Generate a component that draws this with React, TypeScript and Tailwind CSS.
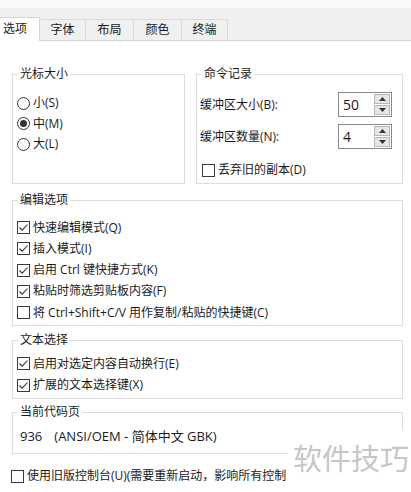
import React from 'react'

const tabs = [
  { label: '字体', w: 'w-[46px]' },
  { label: '布局', w: 'w-[48px]' },
  { label: '颜色', w: 'w-[48px]' },
  { label: '终端', w: 'w-[46px]' },
]

const Radio = ({ checked }: { checked?: boolean }) => (
  <span className="w-[13px] h-[13px] rounded-full border border-[#333] flex items-center justify-center shrink-0">
    {checked && <span className="w-[7px] h-[7px] rounded-full bg-[#333]" />}
  </span>
)

const Check = ({ checked }: { checked?: boolean }) => (
  <span className="w-[13px] h-[13px] border border-[#3a3a3a] bg-white shrink-0 flex items-center justify-center">
    {checked && (
      <svg width="11" height="11" viewBox="0 0 11 11">
        <polyline points="1.5,5.5 4.2,8.2 9.5,2.5" fill="none" stroke="#333" strokeWidth="1.1" />
      </svg>
    )}
  </span>
)

const Group = ({ title, className, children }: { title: string; className?: string; children: React.ReactNode }) => (
  <fieldset className={`border border-[#dcdcdc] ${className ?? ''}`}>
    <legend className="ml-[5px] px-[2px] leading-4">{title}</legend>
    {children}
  </fieldset>
)

const Spin = ({ value }: { value: string }) => (
  <div className="w-[54px] h-[25px] border border-[#8a8a8a] bg-white flex items-center">
    <span className="flex-1 pl-[4px] text-[14px] leading-none">{value}</span>
    <div className="w-[17px] h-full flex flex-col py-[1px] pr-[1px] gap-[1px]">
      <div className="flex-1 bg-[#e6e6e6] border border-[#b8b8b8] flex items-center justify-center">
        <svg width="7" height="4" viewBox="0 0 7 4"><polygon points="3.5,0 7,4 0,4" fill="#333" /></svg>
      </div>
      <div className="flex-1 bg-[#e6e6e6] border border-[#b8b8b8] flex items-center justify-center">
        <svg width="7" height="4" viewBox="0 0 7 4"><polygon points="0,0 7,0 3.5,4" fill="#333" /></svg>
      </div>
    </div>
  </div>
)

const CheckRow = ({ checked, label, h }: { checked?: boolean; label: string; h: string }) => (
  <div className={`flex items-center gap-[3px] whitespace-nowrap ${h}`}>
    <Check checked={checked} />
    <span>{label}</span>
  </div>
)

export default function App() {
  return (
    <div className="relative w-[411px] h-[492px] overflow-hidden bg-white text-[12px] text-[#1a1a1a] font-['Open_Sans','Noto_Sans_CJK_SC',sans-serif]">
      <div className="h-[8px] bg-[#fafafa]" />
      <div className="h-[33px] bg-[#f0f0f0] border-b border-[#d4d4d4] flex items-end">
        <div className="w-[40px] h-[24px] -mb-px bg-white border-r border-t border-[#d4d4d4] pl-[3px] pt-[3px] leading-4">
          选项
        </div>
        {tabs.map((t) => (
          <div
            key={t.label}
            className={`${t.w} h-[21px] border-r border-t border-[#d9d9d9] text-center pt-[2px] leading-4`}
          >
            {t.label}
          </div>
        ))}
      </div>

      <div className="pl-[12px] pr-[8px] pt-[25px] flex flex-col">
        <div className="flex gap-[11px]">
          <Group title="光标大小" className="w-[173px] h-[118px]">
            <div className="pl-[4px] pt-[11px]">
              <div className="flex items-center gap-[3px] h-[20.5px]"><Radio /><span>小(S)</span></div>
              <div className="flex items-center gap-[3px] h-[20.5px]"><Radio checked /><span>中(M)</span></div>
              <div className="flex items-center gap-[3px] h-[20.5px]"><Radio /><span>大(L)</span></div>
            </div>
          </Group>
          <Group title="命令记录" className="flex-1 h-[118px]">
            <div className="pl-[3px] pr-[10px] pt-[10px]">
              <div className="flex items-center justify-between h-[25px]">
                <span>缓冲区大小(B):</span>
                <Spin value="50" />
              </div>
              <div className="flex items-center justify-between h-[25px] mt-[7px]">
                <span>缓冲区数量(N):</span>
                <Spin value="4" />
              </div>
              <div className="mt-[11px] ml-[2px]">
                <CheckRow label="丢弃旧的副本(D)" h="h-5" />
              </div>
            </div>
          </Group>
        </div>

        <Group title="编辑选项" className="mt-[8px] h-[134px]">
          <div className="pl-[4px] pt-[9px]">
            <CheckRow checked label="快速编辑模式(Q)" h="h-[21.25px]" />
            <CheckRow checked label="插入模式(I)" h="h-[21.25px]" />
            <CheckRow checked label="启用 Ctrl 键快捷方式(K)" h="h-[21.25px]" />
            <CheckRow checked label="粘贴时筛选剪贴板内容(F)" h="h-[21.25px]" />
            <CheckRow label="将 Ctrl+Shift+C/V 用作复制/粘贴的快捷键(C)" h="h-[21.25px]" />
          </div>
        </Group>

        <Group title="文本选择" className="mt-[6px] h-[67px]">
          <div className="pl-[4px] pt-[5px]">
            <CheckRow checked label="启用对选定内容自动换行(E)" h="h-[21.5px]" />
            <CheckRow checked label="扩展的文本选择键(X)" h="h-[21.5px]" />
          </div>
        </Group>

        <Group title="当前代码页" className="mt-[5px] h-[50px]">
          <div className="pl-[7px] pt-[7px] h-[27px] flex items-center text-[13px] whitespace-nowrap">
            <span>936</span>
            <span className="ml-[12px]">(ANSI/OEM - 简体中文 GBK)</span>
          </div>
        </Group>

        <div className="mt-[12px] -ml-px">
          <CheckRow label="使用旧版控制台(U)(需要重新启动，影响所有控制" h="h-5" />
        </div>
      </div>

      <div className="absolute left-[288px] right-0 top-[430px] h-[62px] bg-white pl-[5px] pt-[13px] text-[29px] leading-none text-[#c6c6c6] whitespace-nowrap font-['Noto_Sans_CJK_SC',sans-serif]">
        软件技巧
      </div>
    </div>
  )
}
